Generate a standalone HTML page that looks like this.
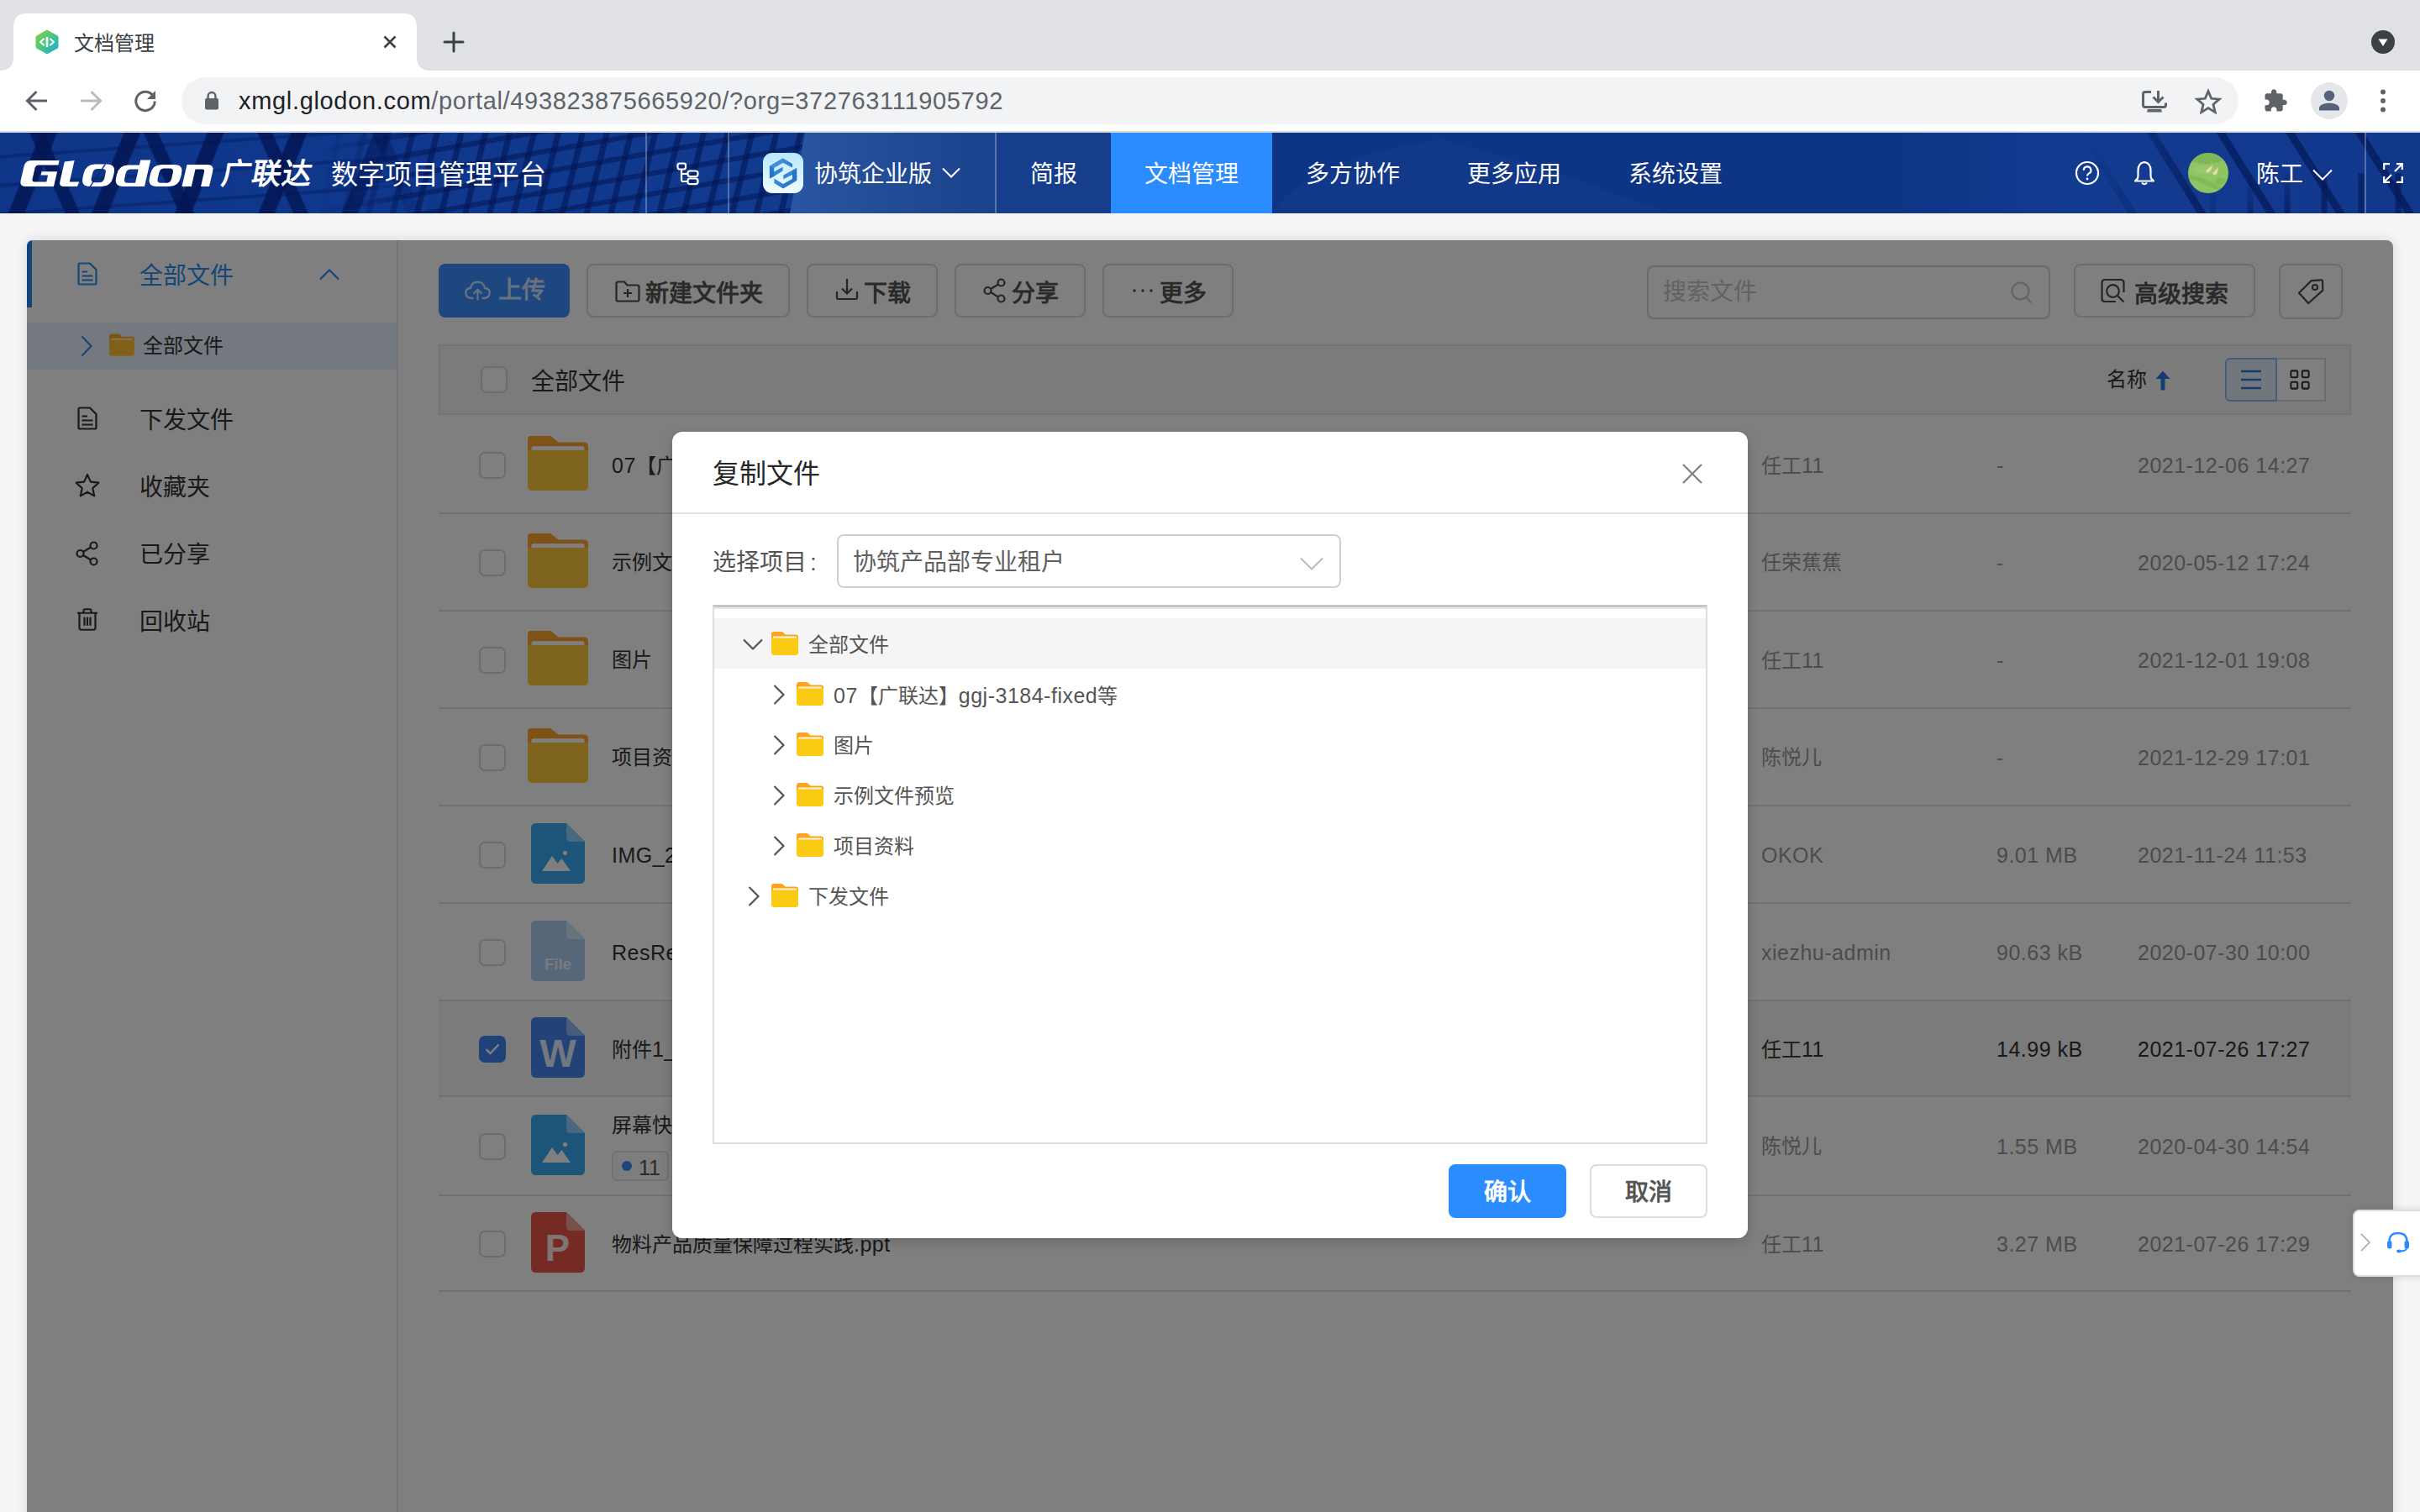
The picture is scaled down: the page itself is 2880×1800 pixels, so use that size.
<!DOCTYPE html>
<html lang="zh-CN"><head><meta charset="utf-8"><title>文档管理</title><style>

html,body{margin:0;padding:0}
body{width:2880px;height:1800px;overflow:hidden;position:relative;background:#f5f5f5;font-family:"Liberation Sans",sans-serif;color:#333;-webkit-font-smoothing:antialiased}
.a{position:absolute}
.t{position:absolute;white-space:nowrap}
svg{position:absolute;overflow:visible}
.nav{position:absolute;top:160px;height:96px;line-height:96px;color:#fff;font-size:28px;white-space:nowrap}
.btn{position:absolute;box-sizing:border-box;border:2px solid #d9d9d9;border-radius:8px;background:#fff}
.btn .t{font-weight:bold;font-size:28px;color:#555}
.cb{position:absolute;box-sizing:border-box;width:32px;height:32px;border:2px solid #d9d9d9;border-radius:7px;background:#fff}
.sep{position:absolute;left:522px;width:2276px;height:2px;background:#e0e4ec}
.c2{position:absolute;font-size:24px;color:#999;white-space:nowrap;height:40px;line-height:40px}
.fn{position:absolute;font-size:24px;color:#333;white-space:nowrap;height:40px;line-height:40px;left:728px}
.mi{position:absolute;margin-top:3px;left:166px;font-size:28px;color:#333;height:80px;line-height:80px;white-space:nowrap}
.l{font-size:25px;letter-spacing:0.5px}
.tr{position:absolute;margin-top:1.5px;font-size:24px;color:#555;white-space:nowrap;height:60px;line-height:60px}

</style></head><body>
<div class="a" style="left:0;top:0;width:2880px;height:84px;background:#dfe1e6"></div>
<svg style="left:0;top:16px" width="520" height="68" viewBox="0 0 520 68"><path d="M0,68 Q16,68 16,52 V16 Q16,0 32,0 H480 Q496,0 496,16 V52 Q496,68 512,68 Z" fill="#fff"/></svg>
<svg style="left:42px;top:35px" width="28" height="30" viewBox="0 0 28 30"><defs><linearGradient id="fg" x1="0" y1="0" x2="1" y2="1"><stop offset="0" stop-color="#8ad33a"/><stop offset="0.55" stop-color="#3fc58c"/><stop offset="1" stop-color="#1aa7ec"/></linearGradient></defs><path d="M14,0.5 L26.5,7.5 Q27.5,8.2 27.5,9.3 V20.7 Q27.5,21.8 26.5,22.5 L14,29.5 L1.5,22.5 Q0.5,21.8 0.5,20.7 V9.3 Q0.5,8.2 1.5,7.5 Z" fill="url(#fg)"/><path d="M10,11.5 L6,15 L10,18.5 M18,11.5 L22,15 L18,18.5" fill="none" stroke="#fff" stroke-width="2" stroke-linecap="round" stroke-linejoin="round"/><path d="M14,10 V20" stroke="#fff" stroke-width="2.6" stroke-linecap="round"/></svg>
<div class="t" style="left:88px;top:32px;height:40px;line-height:40px;font-size:24px;color:#3c4043">文档管理</div>
<svg style="left:456px;top:42px" width="16" height="16" viewBox="0 0 16 16"><path d="M1.5,1.5 L14.5,14.5 M14.5,1.5 L1.5,14.5" stroke="#3c4043" stroke-width="2.6" stroke-linecap="butt"/></svg>
<svg style="left:528px;top:38px" width="24" height="24" viewBox="0 0 24 24"><path d="M12,1 V23 M1,12 H23" stroke="#3c4043" stroke-width="3" stroke-linecap="round"/></svg>
<svg style="left:2822px;top:36px" width="28" height="28" viewBox="0 0 28 28"><circle cx="14" cy="14" r="14" fill="#3c4043"/><path d="M8.5,10.5 H19.5 L14,19 Z" fill="#fff"/></svg>
<div class="a" style="left:0;top:84px;width:2880px;height:72px;background:#fff"></div>
<div class="a" style="left:0;top:156px;width:2880px;height:2px;background:#d5d7da"></div>
<svg style="left:30px;top:106px" width="28" height="28" viewBox="0 0 28 28"><path d="M26,14 H3 M13.5,3 L2.5,14 L13.5,25" fill="none" stroke="#5f6368" stroke-width="3" stroke-linejoin="miter"/></svg>
<svg style="left:94px;top:106px" width="28" height="28" viewBox="0 0 28 28"><path d="M2,14 H25 M14.5,3 L25.5,14 L14.5,25" fill="none" stroke="#babcbe" stroke-width="3" stroke-linejoin="miter"/></svg>
<svg style="left:158px;top:105px" width="30" height="30" viewBox="0 0 30 30"><path d="M24.5,9.5 A11.2,11.2 0 1 0 26.2,15.5" fill="none" stroke="#5f6368" stroke-width="3"/><path d="M27,3 V13 H17 Z" fill="#5f6368"/></svg>
<div class="a" style="left:216px;top:92px;width:2448px;height:56px;border-radius:28px;background:#f1f3f4"></div>
<svg style="left:243px;top:108px" width="18" height="24" viewBox="0 0 18 24"><rect x="1" y="9" width="16" height="13.5" rx="2" fill="#5f6368"/><path d="M4.6,10 V6.4 A4.4,4.4 0 0 1 13.4,6.4 V10" fill="none" stroke="#5f6368" stroke-width="2.4"/></svg>
<div class="t" id="url" style="left:284px;top:98px;height:44px;line-height:44px;font-size:29px;color:#202124;letter-spacing:0.67px">xmgl.glodon.com<span style="color:#5f6368">/portal/493823875665920/?org=372763111905792</span></div>
<svg style="left:2548px;top:106px" width="32" height="30" viewBox="0 0 32 30"><path d="M12,3.5 H5 Q2.5,3.5 2.5,6 V19 Q2.5,21.5 5,21.5 H27 Q29.5,21.5 29.5,19 V16.5" fill="none" stroke="#5f6368" stroke-width="3"/><path d="M8,24 H24 L25,27.5 H7 Z" fill="#5f6368"/><path d="M20.5,2 V15 M14.5,9.5 L20.5,15.5 L26.5,9.5" fill="none" stroke="#5f6368" stroke-width="3"/></svg>
<svg style="left:2612px;top:105px" width="32" height="32" viewBox="0 0 32 32"><path d="M16,3.5 L19.7,12.3 L29.2,13.1 L22,19.3 L24.2,28.6 L16,23.6 L7.8,28.6 L10,19.3 L2.8,13.1 L12.3,12.3 Z" fill="none" stroke="#5f6368" stroke-width="2.8" stroke-linejoin="miter"/></svg>
<svg style="left:2693px;top:105px" width="30" height="30" viewBox="0 0 24 24"><path d="M20.5 11H19V7c0-1.1-.9-2-2-2h-4V3.5C13 2.12 11.88 1 10.5 1S8 2.12 8 3.5V5H4c-1.1 0-1.99.9-1.99 2v3.8H3.5c1.49 0 2.7 1.21 2.7 2.7s-1.21 2.7-2.7 2.7H2V20c0 1.1.9 2 2 2h3.8v-1.5c0-1.49 1.21-2.7 2.7-2.7 1.49 0 2.7 1.21 2.7 2.7V22H17c1.1 0 2-.9 2-2v-4h1.5c1.38 0 2.5-1.12 2.5-2.5S21.88 11 20.5 11z" fill="#5f6368"/></svg>
<svg style="left:2750px;top:98px" width="44" height="44" viewBox="0 0 44 44"><circle cx="22" cy="22" r="22" fill="#e4e6ea"/><circle cx="22" cy="16" r="6.2" fill="#56627a"/><path d="M10,33.5 V31 C10,26.5 17,24.8 22,24.8 S34,26.5 34,31 V33.5 Z" fill="#56627a"/></svg>
<svg style="left:2831px;top:104px" width="10" height="32" viewBox="0 0 10 32"><circle cx="5" cy="5.5" r="3" fill="#5f6368"/><circle cx="5" cy="16" r="3" fill="#5f6368"/><circle cx="5" cy="26.5" r="3" fill="#5f6368"/></svg>
<div class="a" style="left:0;top:158px;width:2880px;height:96px;background:#0d3485;overflow:hidden">
<div class="a" style="left:0;top:0;width:1184px;height:96px;background:linear-gradient(90deg,#0e3588,#10398e 60%,#123c90)"></div>
<div class="a" style="left:0;top:0;width:600px;height:96px;-webkit-mask-image:linear-gradient(90deg,#000 0,#000 400px,transparent 520px);mask-image:linear-gradient(90deg,#000 0,#000 400px,transparent 520px);background:repeating-linear-gradient(112deg,rgba(3,22,84,0) 0,rgba(3,22,84,0) 44px,rgba(3,22,84,0.85) 46px,rgba(3,22,84,0.85) 62px,rgba(3,22,84,0) 64px,rgba(3,22,84,0) 92px)"></div>
<div class="a" style="left:0;top:0;width:600px;height:96px;-webkit-mask-image:linear-gradient(90deg,#000 0,#000 400px,transparent 520px);mask-image:linear-gradient(90deg,#000 0,#000 400px,transparent 520px);background:repeating-linear-gradient(66deg,rgba(3,22,84,0) 0,rgba(3,22,84,0) 70px,rgba(3,22,84,0.8) 72px,rgba(3,22,84,0.8) 86px,rgba(3,22,84,0) 88px,rgba(3,22,84,0) 124px)"></div>
<div class="a" style="left:0;top:0;width:600px;height:96px;-webkit-mask-image:linear-gradient(90deg,#000 0,#000 400px,transparent 520px);mask-image:linear-gradient(90deg,#000 0,#000 400px,transparent 520px);background:repeating-linear-gradient(176deg,rgba(3,22,84,0) 0,rgba(3,22,84,0) 26px,rgba(3,22,84,0.35) 27px,rgba(3,22,84,0.35) 30px,rgba(3,22,84,0) 31px,rgba(3,22,84,0) 34px)"></div>
<div class="a" style="left:380px;top:0;width:580px;height:96px;-webkit-mask-image:linear-gradient(90deg,transparent 0,#000 120px);mask-image:linear-gradient(90deg,transparent 0,#000 120px);background:repeating-linear-gradient(104deg,rgba(3,22,84,0) 0,rgba(3,22,84,0) 20px,rgba(3,22,84,0.6) 21px,rgba(3,22,84,0.6) 27px,rgba(3,22,84,0) 28px)"></div>
<div class="a" style="left:380px;top:0;width:580px;height:96px;-webkit-mask-image:linear-gradient(90deg,transparent 0,#000 120px);mask-image:linear-gradient(90deg,transparent 0,#000 120px);background:repeating-linear-gradient(170deg,rgba(3,22,84,0) 0,rgba(3,22,84,0) 17px,rgba(3,22,84,0.55) 18px,rgba(3,22,84,0.55) 23px,rgba(3,22,84,0) 24px)"></div>
<svg style="left:930px;top:0" width="254" height="96" viewBox="0 0 254 96"><defs><linearGradient id="lz" x1="0" y1="0" x2="1" y2="0"><stop offset="0" stop-color="#2a55a0"/><stop offset="1" stop-color="#1b428c"/></linearGradient></defs><path d="M28,0 H254 V96 H10 Z" fill="url(#lz)"/></svg>
<div class="a" style="left:1184px;top:0;width:1696px;height:96px;background:#0d3485"></div><div class="a" style="left:1184px;top:0;width:138px;height:96px;background:#163e8c"></div>
<svg style="left:1514px;top:0" width="500" height="96" viewBox="0 0 500 96"><path d="M0,96 Q40,30 200,8 Q330,40 470,96 Z" fill="#143c8c" opacity="0.6"/></svg>
<div class="a" style="left:2250px;top:0;width:630px;height:96px;background:linear-gradient(90deg,rgba(20,60,146,0),rgba(20,60,146,0.85) 35%,rgba(18,56,140,0.9))"></div>
<div class="a" style="left:2480px;top:0;width:400px;height:96px;background:repeating-linear-gradient(58deg,rgba(3,22,84,0) 0,rgba(3,22,84,0) 44px,rgba(3,22,84,0.65) 45px,rgba(3,22,84,0.65) 53px,rgba(3,22,84,0) 54px,rgba(3,22,84,0) 70px);-webkit-mask-image:linear-gradient(90deg,transparent,#000 35%);mask-image:linear-gradient(90deg,transparent,#000 35%)"></div>
<div class="a" style="left:2600px;top:48px;width:280px;height:48px;background:repeating-linear-gradient(90deg,rgba(3,22,84,0) 0,rgba(3,22,84,0) 30px,rgba(3,22,84,0.6) 31px,rgba(3,22,84,0.6) 37px,rgba(3,22,84,0) 38px,rgba(3,22,84,0) 44px);-webkit-mask-image:linear-gradient(160deg,transparent 20%,#000 60%);mask-image:linear-gradient(160deg,transparent 20%,#000 60%)"></div>
</div>
<div class="a" style="left:0;top:254px;width:2880px;height:1px;background:#fff"></div>
<div class="a" style="left:768px;top:158px;width:2px;height:96px;background:rgba(255,255,255,0.28)"></div>
<div class="a" style="left:866px;top:158px;width:2px;height:96px;background:rgba(255,255,255,0.28)"></div>
<div class="a" style="left:1184px;top:158px;width:2px;height:96px;background:rgba(255,255,255,0.28)"></div>
<div class="a" style="left:2814px;top:158px;width:2px;height:96px;background:rgba(255,255,255,0.28)"></div>
<div class="a" style="left:1322px;top:158px;width:192px;height:96px;background:#2a8cff"></div>
<svg style="left:0;top:191px" width="260" height="32" viewBox="0 0 260 32"><g transform="translate(7.16,0) skewX(-13)" fill="#fff" fill-rule="evenodd">
<path d="M30,0 H63.5 V5.5 H40 Q36.5,5.5 36.5,9 V22 Q36.5,25.5 40,25.5 H54 V17.6 H45.5 V13.3 H64 V31 H30 Q23,31 23,24 V7 Q23,0 30,0 Z"/>
<path d="M70,1.5 L81.5,0 V25.5 H93 L92,31 H76 Q70,31 70,25 Z"/>
<path d="M107,4.4 H121 Q132,4.4 132,15.4 V20 Q132,31 121,31 H107 Q96,31 96,20 V15.4 Q96,4.4 107,4.4 Z M111.5,10 Q106.5,10 106.5,15 V21.2 Q106.5,26.2 111.5,26.2 H117 Q122,26.2 122,21.2 V15 Q122,10 117,10 Z"/>
<path d="M160,-0.5 H172 V31 H146.7 Q135.7,31 135.7,20 V16.5 Q135.7,5.5 146.7,5.5 H160 Z M151,10.6 Q146,10.6 146,15.6 V21.7 Q146,26.7 151,26.7 H160 V10.6 Z"/>
<path d="M186.5,5 H201.5 Q212.5,5 212.5,16 V20 Q212.5,31 201.5,31 H186.5 Q175.5,31 175.5,20 V16 Q175.5,5 186.5,5 Z M190.5,9.5 Q185.5,9.5 185.5,14.5 V21.7 Q185.5,26.7 190.5,26.7 H197 Q202,26.7 202,21.7 V14.5 Q202,9.5 197,9.5 Z"/>
<path d="M216.5,5 H241 Q249,5 249,13 V31 H239 V13.5 Q239,10.6 236,10.6 H227.8 V31 H216.5 Z"/>
<path d="M106.2,31.8 L107.8,31.8 L120,4.4 L118.4,4.4 Z" fill="#0a2a78"/>
</g></svg>
<div class="t" style="left:260px;top:183px;height:48px;line-height:48px;font-size:35px;font-weight:700;color:#fff;letter-spacing:1px;transform:skewX(-10deg);transform-origin:left bottom">广联达</div>
<div class="t" style="left:394px;top:184px;height:48px;line-height:48px;font-size:32px;color:#fff">数字项目管理平台</div>
<svg style="left:805px;top:193px" width="28" height="28" viewBox="0 0 28 28"><g fill="none" stroke="#fff" stroke-width="2.2"><rect x="1.5" y="1.5" width="9.5" height="7" rx="2.2"/><rect x="13.5" y="10.5" width="12" height="6.6" rx="2.6"/><rect x="13.5" y="19.5" width="12" height="6.6" rx="2.6"/><path d="M6,8.5 V21 Q6,23 8,23 H13.5 M6,14 H13.5"/></g></svg>
<svg style="left:908px;top:182px" width="48" height="48" viewBox="0 0 48 48"><defs><linearGradient id="ag" x1="0" y1="0" x2="0" y2="1"><stop offset="0" stop-color="#b9e8ff"/><stop offset="1" stop-color="#effcff"/></linearGradient><linearGradient id="al" x1="0" y1="0" x2="1" y2="1"><stop offset="0" stop-color="#4aa0ea"/><stop offset="1" stop-color="#1f69c4"/></linearGradient></defs><rect width="48" height="48" rx="11" fill="url(#ag)"/>
<path d="M7.9,15.5 L23.6,6.2 L35,12.9 L35,17.6 L23.8,11.7 L13.1,17.9 L13.1,22.6 L23.6,16.7 L23.6,21.2 L13.1,27.9 L7.9,30.5 Z" fill="url(#al)"/>
<path d="M40.2,18.1 L40.2,33.1 L24,42.6 L13.3,36 L13.3,30.5 L24,36.9 L35,30.7 L35,26 L24.3,31.2 L24.3,26.4 L35,20.7 Z" fill="url(#al)"/>
<path d="M7.9,15.5 L13.1,17.9 L13.1,27.9 L7.9,30.5 Z" fill="#1f66bd" opacity="0.55"/><path d="M40.2,18.1 L35,20.7 L35,30.7 L40.2,33.1 Z" fill="#1f66bd" opacity="0.55"/></svg>
<div class="nav" style="left:969px">协筑企业版</div>
<svg style="left:1121px;top:199px" width="22" height="13" viewBox="0 0 22 13"><path d="M1,1.5 L11,11.5 L21,1.5" fill="none" stroke="#fff" stroke-width="2"/></svg>
<div class="nav" style="left:1226px">简报</div>
<div class="nav" style="left:1362px">文档管理</div>
<div class="nav" style="left:1554px">多方协作</div>
<div class="nav" style="left:1746px">更多应用</div>
<div class="nav" style="left:1938px">系统设置</div>
<svg style="left:2469px;top:191px" width="30" height="30" viewBox="0 0 30 30"><circle cx="15" cy="15" r="13" fill="none" stroke="#fff" stroke-width="2.2"/><path d="M10.8,11.8 A4.3,4.3 0 1 1 16.8,15.6 Q15,16.6 15,18.6" fill="none" stroke="#fff" stroke-width="2.2"/><circle cx="15" cy="22" r="1.4" fill="#fff"/></svg>
<svg style="left:2539px;top:191px" width="26" height="30" viewBox="0 0 26 30"><path d="M13,2 Q5.5,3 5.5,12 V19 Q5.5,22 2,24.5 H24 Q20.5,22 20.5,19 V12 Q20.5,3 13,2 Z" fill="none" stroke="#fff" stroke-width="2.2" stroke-linejoin="round"/><path d="M10,26.5 Q13,29.5 16,26.5" fill="none" stroke="#fff" stroke-width="2.2"/></svg>
<svg style="left:2604px;top:182px" width="48" height="48" viewBox="0 0 48 48"><defs><clipPath id="ac"><circle cx="24" cy="24" r="24"/></clipPath></defs><g clip-path="url(#ac)"><rect width="48" height="48" fill="#8fc463"/><ellipse cx="22" cy="6" rx="20" ry="7" fill="#79b451" opacity="0.8"/><path d="M0,28 Q14,26 30,36 T48,40 V46 Q30,44 16,36 T0,34 Z" fill="#7cb754" opacity="0.7"/><ellipse cx="38" cy="34" rx="6" ry="4" fill="#7ab652" opacity="0.7"/><ellipse cx="20" cy="20" rx="16" ry="5" fill="#9fcb72" opacity="0.6"/>
<path d="M21.2,21.6 L29.2,14 L27.1,21.2 L22.4,24.1 Z M28.8,24.6 L36,16.9 L34.7,24.6 L31.7,26.7 Z" fill="#e3deb0"/><path d="M28.5,14.5 L27.5,10.5 M36,17 L38.5,18.5" stroke="#c9a95e" stroke-width="0.8"/></g></svg>
<div class="nav" style="left:2685px">陈工</div>
<svg style="left:2752px;top:201px" width="24" height="14" viewBox="0 0 24 14"><path d="M1,1.5 L12,12.5 L23,1.5" fill="none" stroke="#fff" stroke-width="2"/></svg>
<svg style="left:2836px;top:194px" width="24" height="24" viewBox="0 0 24 24"><g fill="none" stroke="#fff" stroke-width="2.2"><path d="M1.2,8 V1.2 H8 M16,1.2 H22.8 V8 M22.8,16 V22.8 H16 M8,22.8 H1.2 V16"/><path d="M22,2 L14,10 M2,22 L10,14"/><path d="M14.5,2 H22 V9.5 M2,14.5 V22 H9.5" stroke-width="0"/></g></svg>
<div class="a" style="left:32px;top:286px;width:2816px;height:1600px;background:#fff;border-radius:8px;box-shadow:0 0 14px rgba(0,0,0,0.13)"></div>
<div class="a" style="left:472px;top:286px;width:2px;height:1520px;background:#e4e8ee"></div>
<div class="a" style="left:32px;top:286px;width:6px;height:80px;background:#2b85f0;border-top-left-radius:8px"></div>
<svg style="left:92px;top:312px" width="24" height="28" viewBox="0 0 24 28"><g fill="none" stroke="#2d8cf0" stroke-width="2.2" stroke-linejoin="round"><path d="M1.5,3 Q1.5,1.5 3,1.5 H15 L22.5,9 V25 Q22.5,26.5 21,26.5 H3 Q1.5,26.5 1.5,25 Z"/><path d="M5.5,11.5 H12 M5.5,16.5 H18.5 M5.5,21.5 H18.5"/></g></svg>
<div class="mi" style="top:286px;color:#2d8cf0">全部文件</div>
<svg style="left:380px;top:320px" width="24" height="14" viewBox="0 0 24 14"><path d="M1,12.5 L12,1.5 L23,12.5" fill="none" stroke="#2d8cf0" stroke-width="2.2"/></svg>
<div class="a" style="left:32px;top:384px;width:440px;height:56px;background:#e9f2ff"></div>
<svg style="left:96px;top:399px" width="14" height="26" viewBox="0 0 14 26"><path d="M1.5,1.5 L12.5,13 L1.5,24.5" fill="none" stroke="#2d8cf0" stroke-width="2.2"/></svg>
<svg style="left:130px;top:397px" width="30" height="27" viewBox="0 0 32 28"><path d="M0,3 Q0,0 3,0 H11.5 Q13,0 14,1 L16.5,3.5 H29 Q32,3.5 32,6.5 V11 H0 Z" fill="#ffa91f"/><rect x="2" y="5.6" width="28" height="4" rx="1" fill="#fff0c8"/><path d="M0,7.5 H32 V25 Q32,28 29,28 H3 Q0,28 0,25 Z" fill="#ffc332"/></svg>
<div class="t" style="left:170px;top:384px;height:56px;line-height:56px;font-size:24px;color:#333">全部文件</div>
<svg style="left:92px;top:484px" width="24" height="28" viewBox="0 0 24 28"><g fill="none" stroke="#333" stroke-width="2.2" stroke-linejoin="round"><path d="M1.5,3 Q1.5,1.5 3,1.5 H15 L22.5,9 V25 Q22.5,26.5 21,26.5 H3 Q1.5,26.5 1.5,25 Z"/><path d="M5.5,11.5 H12 M5.5,16.5 H18.5 M5.5,21.5 H18.5"/></g></svg>
<div class="mi" style="top:458px">下发文件</div>
<svg style="left:89px;top:563px" width="30" height="30" viewBox="0 0 30 30"><path d="M15,2 L18.9,10.6 L28.3,11.7 L21.3,18.1 L23.2,27.4 L15,22.7 L6.8,27.4 L8.7,18.1 L1.7,11.7 L11.1,10.6 Z" fill="none" stroke="#333" stroke-width="2.2" stroke-linejoin="round"/></svg>
<div class="mi" style="top:538px">收藏夹</div>
<svg style="left:90px;top:644px" width="28" height="30" viewBox="0 0 28 30"><g fill="none" stroke="#333" stroke-width="2.2"><circle cx="21.5" cy="5.5" r="4"/><circle cx="5.5" cy="15" r="4"/><circle cx="21.5" cy="24.5" r="4"/><path d="M9,13 L18,7.5 M9,17 L18,22.5"/></g></svg>
<div class="mi" style="top:618px">已分享</div>
<svg style="left:91px;top:724px" width="26" height="27" viewBox="0 0 26 30" preserveAspectRatio="none"><g fill="none" stroke="#333" stroke-width="2.2" stroke-linejoin="round"><path d="M1,6.5 H25 M8.5,6.5 V3.5 Q8.5,1.5 10.5,1.5 H15.5 Q17.5,1.5 17.5,3.5 V6.5"/><path d="M3.5,6.5 V26 Q3.5,28.5 6,28.5 H20 Q22.5,28.5 22.5,26 V6.5"/><path d="M9.5,12 V23 M13,12 V23 M16.5,12 V23"/></g></svg>
<div class="mi" style="top:698px">回收站</div>
<div class="a" style="left:522px;top:314px;width:156px;height:64px;border-radius:8px;background:#3a8ffc"></div>
<svg style="left:553px;top:334px" width="31" height="24" viewBox="0 0 36 28"><g fill="none" stroke="#cfe3ff" stroke-width="2.7" stroke-linecap="round" stroke-linejoin="round"><path d="M11,24.5 H9 Q1.5,24 1.5,17 Q1.5,11 8,10.5 Q10,2 18,2 Q26,2 28,10.5 Q34.5,11 34.5,17 Q34.5,24 27,24.5 H25"/><path d="M18,26 V13 M13,17.5 L18,12.5 L23,17.5"/></g></svg>
<div class="t" style="left:593px;top:314px;height:64px;line-height:64px;font-size:28px;font-weight:bold;color:#cfe3ff">上传</div>
<div class="btn" style="left:698px;top:314px;width:242px;height:64px"><svg style="left:32px;top:17.5px" width="30" height="26" viewBox="0 0 30 26"><g fill="none" stroke="#4a4a4a" stroke-width="2.2" stroke-linejoin="round"><path d="M1.5,3.5 Q1.5,1.5 3.5,1.5 H11 L14.5,5.5 H26.5 Q28.5,5.5 28.5,7.5 V22.5 Q28.5,24.5 26.5,24.5 H3.5 Q1.5,24.5 1.5,22.5 Z"/><path d="M15,10 V20 M10,15 H20"/></g></svg><div class="t" style="left:68px;top:2px;height:64px;line-height:64px">新建文件夹</div></div>
<div class="btn" style="left:960px;top:314px;width:156px;height:64px"><svg style="left:32px;top:14px" width="28" height="28" viewBox="0 0 28 28"><g fill="none" stroke="#4a4a4a" stroke-width="2.2" stroke-linejoin="round"><path d="M2,17 V24 Q2,26 4,26 H24 Q26,26 26,24 V17"/><path d="M14,2 V19 M8,13.5 L14,19.5 L20,13.5"/></g></svg><div class="t" style="left:66px;top:2px;height:64px;line-height:64px">下载</div></div>
<div class="btn" style="left:1136px;top:314px;width:156px;height:64px"><svg style="left:32px;top:15px" width="28" height="30" viewBox="0 0 28 30"><g fill="none" stroke="#4a4a4a" stroke-width="2.2"><circle cx="21.5" cy="5.5" r="4"/><circle cx="5.5" cy="15" r="4"/><circle cx="21.5" cy="24.5" r="4"/><path d="M9,13 L18,7.5 M9,17 L18,22.5"/></g></svg><div class="t" style="left:66px;top:2px;height:64px;line-height:64px">分享</div></div>
<div class="btn" style="left:1312px;top:314px;width:156px;height:64px"><svg style="left:34px;top:28px" width="24" height="4" viewBox="0 0 24 4"><circle cx="2" cy="2" r="1.7" fill="#4a4a4a"/><circle cx="12" cy="2" r="1.7" fill="#4a4a4a"/><circle cx="22" cy="2" r="1.7" fill="#4a4a4a"/></svg><div class="t" style="left:66px;top:2px;height:64px;line-height:64px">更多</div></div>
<div class="a" style="box-sizing:border-box;left:1960px;top:316px;width:480px;height:64px;border:2px solid #d4d4d4;border-radius:8px;background:#fff"></div>
<div class="t" style="left:1979px;top:316px;height:64px;line-height:64px;font-size:28px;color:#c4c4c4">搜索文件</div>
<svg style="left:2393px;top:334px" width="26" height="28" viewBox="0 0 26 28"><circle cx="11.5" cy="12.5" r="10" fill="none" stroke="#c8c8c8" stroke-width="2.2"/><path d="M19,20.5 L24.5,26.5" stroke="#c8c8c8" stroke-width="2.2"/></svg>
<div class="btn" style="left:2468px;top:314px;width:216px;height:64px"><svg style="left:30px;top:15px" width="30" height="30" viewBox="0 0 30 30"><g fill="none" stroke="#4a4a4a" stroke-width="2.2"><path d="M18,28 H5 Q1.5,28 1.5,24.5 V5.5 Q1.5,2 5,2 H24 Q27.5,2 27.5,5.5 V17"/><circle cx="14.5" cy="15.5" r="7.3"/><path d="M20,21 L27.5,28.5"/></g></svg><div class="t" style="left:70px;top:3px;height:64px;line-height:64px">高级搜索</div></div>
<div class="btn" style="left:2712px;top:314px;width:76px;height:66px"><svg style="left:21px;top:17px" width="32" height="30" viewBox="0 0 32 30"><g fill="none" stroke="#4a4a4a" stroke-width="2.2" stroke-linejoin="round"><path d="M1,15.7 L15.5,1.2 L27.5,0.3 Q29,0.2 29,1.7 L29.3,12.6 L12.2,28 Z"/><circle cx="20" cy="9" r="3"/></g></svg></div>
<div class="a" style="box-sizing:border-box;left:522px;top:410px;width:2276px;height:84px;background:#f6f6f6;border:2px solid #e8e8e8"></div>
<div class="cb" style="left:572px;top:436px"></div>
<div class="t" style="left:632px;top:423px;height:64px;line-height:64px;font-size:28px;color:#333">全部文件</div>
<div class="t" style="left:2507px;top:422px;height:60px;line-height:60px;font-size:24px;color:#333">名称</div>
<svg style="left:2565px;top:441px" width="18" height="24" viewBox="0 0 18 24"><path d="M9,0.5 L17.5,10 H11.5 V23.5 H6.5 V10 H0.5 Z" fill="#2d7be0"/></svg>
<div class="a" style="box-sizing:border-box;left:2708px;top:426px;width:60px;height:52px;border:2px solid #d9d9d9;background:#fff"></div>
<div class="a" style="box-sizing:border-box;left:2648px;top:426px;width:62px;height:52px;border:2px solid #8ab8f5;background:#e4eefc;border-radius:6px 0 0 6px"></div>
<svg style="left:2666px;top:440px" width="26" height="24" viewBox="0 0 26 24"><path d="M1,2 H25 M1,12 H25 M1,22 H25" stroke="#2d7be0" stroke-width="2.4"/></svg>
<svg style="left:2725px;top:440px" width="24" height="24" viewBox="0 0 26 26"><g fill="none" stroke="#333" stroke-width="2.2"><rect x="1.5" y="1.5" width="8.5" height="8.5" rx="1.5"/><rect x="16" y="1.5" width="8.5" height="8.5" rx="1.5"/><rect x="1.5" y="16" width="8.5" height="8.5" rx="1.5"/><rect x="16" y="16" width="8.5" height="8.5" rx="1.5"/></g></svg>
<div class="sep" style="top:610px"></div>
<div class="cb" style="left:570px;top:538px"></div>
<svg style="left:628px;top:519px" width="72" height="65" viewBox="0 0 72 65"><path d="M0,4 Q0,0 4,0 H27 L36.5,7.5 H67 Q72,7.5 72,12.5 V19 H0 Z" fill="#ffa62f"/><path d="M4.5,18 V14.5 Q4.5,12.3 6.7,12.3 H65.3 Q67.5,12.3 67.5,14.5 V18 Z" fill="#fff"/><path d="M0,17 H72 V60 Q72,65 67,65 H5 Q0,65 0,60 Z" fill="#ffc93c"/></svg>
<div class="fn" style="top:534px"><span class="l">07</span>【广联达】<span class="l">ggj-3184-fixed</span>等</div>
<div class="c2" style="left:2096px;top:534px;color:#999">任工<span class="l">11</span></div>
<div class="c2" style="left:2376px;top:534px;color:#999"><span class="l">-</span></div>
<div class="c2 dt" style="left:2544px;top:534px;color:#999"><span class="l">2021-12-06 14:27</span></div>
<div class="sep" style="top:726px"></div>
<div class="cb" style="left:570px;top:654px"></div>
<svg style="left:628px;top:635px" width="72" height="65" viewBox="0 0 72 65"><path d="M0,4 Q0,0 4,0 H27 L36.5,7.5 H67 Q72,7.5 72,12.5 V19 H0 Z" fill="#ffa62f"/><path d="M4.5,18 V14.5 Q4.5,12.3 6.7,12.3 H65.3 Q67.5,12.3 67.5,14.5 V18 Z" fill="#fff"/><path d="M0,17 H72 V60 Q72,65 67,65 H5 Q0,65 0,60 Z" fill="#ffc93c"/></svg>
<div class="fn" style="top:650px">示例文件预览</div>
<div class="c2" style="left:2096px;top:650px;color:#999">任荣蕉蕉</div>
<div class="c2" style="left:2376px;top:650px;color:#999"><span class="l">-</span></div>
<div class="c2 dt" style="left:2544px;top:650px;color:#999"><span class="l">2020-05-12 17:24</span></div>
<div class="sep" style="top:842px"></div>
<div class="cb" style="left:570px;top:770px"></div>
<svg style="left:628px;top:751px" width="72" height="65" viewBox="0 0 72 65"><path d="M0,4 Q0,0 4,0 H27 L36.5,7.5 H67 Q72,7.5 72,12.5 V19 H0 Z" fill="#ffa62f"/><path d="M4.5,18 V14.5 Q4.5,12.3 6.7,12.3 H65.3 Q67.5,12.3 67.5,14.5 V18 Z" fill="#fff"/><path d="M0,17 H72 V60 Q72,65 67,65 H5 Q0,65 0,60 Z" fill="#ffc93c"/></svg>
<div class="fn" style="top:766px">图片</div>
<div class="c2" style="left:2096px;top:766px;color:#999">任工<span class="l">11</span></div>
<div class="c2" style="left:2376px;top:766px;color:#999"><span class="l">-</span></div>
<div class="c2 dt" style="left:2544px;top:766px;color:#999"><span class="l">2021-12-01 19:08</span></div>
<div class="sep" style="top:958px"></div>
<div class="cb" style="left:570px;top:886px"></div>
<svg style="left:628px;top:867px" width="72" height="65" viewBox="0 0 72 65"><path d="M0,4 Q0,0 4,0 H27 L36.5,7.5 H67 Q72,7.5 72,12.5 V19 H0 Z" fill="#ffa62f"/><path d="M4.5,18 V14.5 Q4.5,12.3 6.7,12.3 H65.3 Q67.5,12.3 67.5,14.5 V18 Z" fill="#fff"/><path d="M0,17 H72 V60 Q72,65 67,65 H5 Q0,65 0,60 Z" fill="#ffc93c"/></svg>
<div class="fn" style="top:882px">项目资料</div>
<div class="c2" style="left:2096px;top:882px;color:#999">陈悦儿</div>
<div class="c2" style="left:2376px;top:882px;color:#999"><span class="l">-</span></div>
<div class="c2 dt" style="left:2544px;top:882px;color:#999"><span class="l">2021-12-29 17:01</span></div>
<div class="sep" style="top:1074px"></div>
<div class="cb" style="left:570px;top:1002px"></div>
<svg style="left:632px;top:980px" width="64" height="72" viewBox="0 0 64 72"><path d="M0,6 Q0,0 6,0 H42 L64,22 V66 Q64,72 58,72 H6 Q0,72 0,66 Z" fill="#3aa9f5"/><path d="M42,0 L64,22 H47 Q42,22 42,17 Z" fill="#8fd0ff"/><path d="M13,57 L25,39 L31.5,48 L36.5,42 L47,57 Z" fill="#fff"/><circle cx="40.5" cy="35.5" r="2.6" fill="#fff"/></svg>
<div class="fn" style="top:998px"><span class="l">IMG_20211124.jpg</span></div>
<div class="c2" style="left:2096px;top:998px;color:#999"><span class="l">OKOK</span></div>
<div class="c2" style="left:2376px;top:998px;color:#999"><span class="l">9.01 MB</span></div>
<div class="c2 dt" style="left:2544px;top:998px;color:#999"><span class="l">2021-11-24 11:53</span></div>
<div class="sep" style="top:1190px"></div>
<div class="cb" style="left:570px;top:1118px"></div>
<svg style="left:632px;top:1096px" width="64" height="72" viewBox="0 0 64 72"><path d="M0,6 Q0,0 6,0 H42 L64,22 V66 Q64,72 58,72 H6 Q0,72 0,66 Z" fill="#aecff5"/><path d="M42,0 L64,22 H47 Q42,22 42,17 Z" fill="#d3e6fb"/><text x="32" y="58" text-anchor="middle" font-family="Liberation Sans, sans-serif" font-weight="bold" font-size="18.5" fill="#eef6ff">File</text></svg>
<div class="fn" style="top:1114px"><span class="l">ResReport.dat</span></div>
<div class="c2" style="left:2096px;top:1114px;color:#999"><span class="l">xiezhu-admin</span></div>
<div class="c2" style="left:2376px;top:1114px;color:#999"><span class="l">90.63 kB</span></div>
<div class="c2 dt" style="left:2544px;top:1114px;color:#999"><span class="l">2020-07-30 10:00</span></div>
<div class="a" style="left:522px;top:1192px;width:2276px;height:112px;background:#f6f6f6"></div>
<div class="sep" style="top:1304px"></div>
<div class="cb" style="left:570px;top:1233px;background:#3f86f3;border-color:#3f86f3"><svg style="left:5px;top:7px" width="18" height="14" viewBox="0 0 18 14"><path d="M1.5,7 L6.5,12 L16.5,1.5" fill="none" stroke="#fff" stroke-width="2.4"/></svg></div>
<svg style="left:632px;top:1211px" width="64" height="72" viewBox="0 0 64 72"><path d="M0,6 Q0,0 6,0 H42 L64,22 V66 Q64,72 58,72 H6 Q0,72 0,66 Z" fill="#4784f0"/><path d="M42,0 L64,22 H47 Q42,22 42,17 Z" fill="#8fb6fa"/><text x="32" y="59" text-anchor="middle" font-family="Liberation Sans, sans-serif" font-weight="bold" font-size="46" fill="#e6efff">W</text></svg>
<div class="fn" style="top:1229px">附件<span class="l">1_</span>项目说明<span class="l">.docx</span></div>
<div class="c2" style="left:2096px;top:1229px;color:#333">任工<span class="l">11</span></div>
<div class="c2" style="left:2376px;top:1229px;color:#333"><span class="l">14.99 kB</span></div>
<div class="c2 dt" style="left:2544px;top:1229px;color:#333"><span class="l">2021-07-26 17:27</span></div>
<div class="sep" style="top:1422px"></div>
<div class="cb" style="left:570px;top:1349px"></div>
<svg style="left:632px;top:1327px" width="64" height="72" viewBox="0 0 64 72"><path d="M0,6 Q0,0 6,0 H42 L64,22 V66 Q64,72 58,72 H6 Q0,72 0,66 Z" fill="#3aa9f5"/><path d="M42,0 L64,22 H47 Q42,22 42,17 Z" fill="#8fd0ff"/><path d="M13,57 L25,39 L31.5,48 L36.5,42 L47,57 Z" fill="#fff"/><circle cx="40.5" cy="35.5" r="2.6" fill="#fff"/></svg>
<div class="fn" style="top:1319px">屏幕快照 <span class="l">2020-04-30.png</span></div>
<div class="a" style="box-sizing:border-box;left:728px;top:1370px;width:68px;height:36px;border:2px solid #e4e4e4;border-radius:6px;background:#fafafa"></div>
<div class="a" style="left:740px;top:1382px;width:12px;height:12px;border-radius:6px;background:#3a8ff5"></div>
<div class="t" style="left:760px;top:1372px;height:36px;line-height:36px;font-size:25px;color:#555">11</div>
<div class="c2" style="left:2096px;top:1345px;color:#999">陈悦儿</div>
<div class="c2" style="left:2376px;top:1345px;color:#999"><span class="l">1.55 MB</span></div>
<div class="c2 dt" style="left:2544px;top:1345px;color:#999"><span class="l">2020-04-30 14:54</span></div>
<div class="sep" style="top:1536px"></div>
<div class="cb" style="left:570px;top:1465px"></div>
<svg style="left:632px;top:1443px" width="64" height="72" viewBox="0 0 64 72"><path d="M0,6 Q0,0 6,0 H42 L64,22 V66 Q64,72 58,72 H6 Q0,72 0,66 Z" fill="#ea5547"/><path d="M42,0 L64,22 H47 Q42,22 42,17 Z" fill="#f5a097"/><text x="31.5" y="58" text-anchor="middle" font-family="Liberation Sans, sans-serif" font-weight="bold" font-size="44" fill="#ffe9e6">P</text></svg>
<div class="fn" style="top:1461px">物料产品质量保障过程实践<span class="l">.ppt</span></div>
<div class="c2" style="left:2096px;top:1461px;color:#999">任工<span class="l">11</span></div>
<div class="c2" style="left:2376px;top:1461px;color:#999"><span class="l">3.27 MB</span></div>
<div class="c2 dt" style="left:2544px;top:1461px;color:#999"><span class="l">2021-07-26 17:29</span></div>
<div class="a" style="left:32px;top:286px;width:2816px;height:1600px;background:rgba(0,0,0,0.5);border-radius:8px"></div>
<div class="a" style="left:800px;top:514px;width:1280px;height:960px;background:#fff;border-radius:12px;box-shadow:0 4px 14px rgba(0,0,0,0.18)"></div>
<div class="t" style="left:848px;top:534px;height:60px;line-height:60px;font-size:32px;color:#262626">复制文件</div>
<svg style="left:2002px;top:552px" width="24" height="24" viewBox="0 0 24 24"><path d="M1,1 L23,23 M23,1 L1,23" stroke="#808080" stroke-width="2.2"/></svg>
<div class="a" style="left:800px;top:610px;width:1280px;height:2px;background:#e3e3e3"></div>
<div class="t" style="left:848px;top:637.5px;height:64px;line-height:64px;font-size:28px;color:#555">选择项目<span style="margin-left:4px">:</span></div>
<div class="a" style="box-sizing:border-box;left:996px;top:636px;width:600px;height:64px;border:2px solid #d0d0d0;border-radius:8px;background:#fff"></div>
<div class="t" style="left:1015px;top:637.5px;height:64px;line-height:64px;font-size:28px;color:#606060">协筑产品部专业租户</div>
<svg style="left:1547px;top:663px" width="28" height="16" viewBox="0 0 28 16"><path d="M1,1.5 L14,14.5 L27,1.5" fill="none" stroke="#bdbdbd" stroke-width="2.2"/></svg>
<div class="a" style="box-sizing:border-box;left:848px;top:720px;width:1184px;height:642px;background:#fff;border-style:solid;border-width:3px 2px 2px 2px;border-color:#c6c6c6 #dcdcdc #dcdcdc #dedede"></div>
<div class="a" style="left:850px;top:723px;width:1180px;height:2px;background:#e9e9e9"></div>
<div class="a" style="left:850px;top:736px;width:1180px;height:60px;background:#f5f5f5"></div>
<svg style="left:884px;top:760px" width="24" height="14" viewBox="0 0 24 14"><path d="M1,1.5 L12,12.5 L23,1.5" fill="none" stroke="#555" stroke-width="2.2"/></svg>
<svg style="left:918px;top:752px" width="32" height="28" viewBox="0 0 32 28"><path d="M0,3 Q0,0 3,0 H11.5 Q13,0 14,1 L16.5,3.5 H29 Q32,3.5 32,6.5 V11 H0 Z" fill="#ffa21e"/><rect x="2" y="5.6" width="28" height="4" rx="1" fill="#fff6dc"/><path d="M0,7.5 H32 V25 Q32,28 29,28 H3 Q0,28 0,25 Z" fill="#fbcb14"/></svg>
<div class="tr" style="left:962px;top:736px">全部文件</div>
<svg style="left:920px;top:815px" width="14" height="24" viewBox="0 0 14 24"><path d="M1.5,1 L12.5,12 L1.5,23" fill="none" stroke="#555" stroke-width="2.2"/></svg>
<svg style="left:948px;top:812px" width="32" height="28" viewBox="0 0 32 28"><path d="M0,3 Q0,0 3,0 H11.5 Q13,0 14,1 L16.5,3.5 H29 Q32,3.5 32,6.5 V11 H0 Z" fill="#ffa21e"/><rect x="2" y="5.6" width="28" height="4" rx="1" fill="#fff6dc"/><path d="M0,7.5 H32 V25 Q32,28 29,28 H3 Q0,28 0,25 Z" fill="#fbcb14"/></svg>
<div class="tr" style="left:992px;top:796px"><span class="l">07</span>【广联达】<span class="l">ggj-3184-fixed</span>等</div>
<svg style="left:920px;top:875px" width="14" height="24" viewBox="0 0 14 24"><path d="M1.5,1 L12.5,12 L1.5,23" fill="none" stroke="#555" stroke-width="2.2"/></svg>
<svg style="left:948px;top:872px" width="32" height="28" viewBox="0 0 32 28"><path d="M0,3 Q0,0 3,0 H11.5 Q13,0 14,1 L16.5,3.5 H29 Q32,3.5 32,6.5 V11 H0 Z" fill="#ffa21e"/><rect x="2" y="5.6" width="28" height="4" rx="1" fill="#fff6dc"/><path d="M0,7.5 H32 V25 Q32,28 29,28 H3 Q0,28 0,25 Z" fill="#fbcb14"/></svg>
<div class="tr" style="left:992px;top:856px">图片</div>
<svg style="left:920px;top:935px" width="14" height="24" viewBox="0 0 14 24"><path d="M1.5,1 L12.5,12 L1.5,23" fill="none" stroke="#555" stroke-width="2.2"/></svg>
<svg style="left:948px;top:932px" width="32" height="28" viewBox="0 0 32 28"><path d="M0,3 Q0,0 3,0 H11.5 Q13,0 14,1 L16.5,3.5 H29 Q32,3.5 32,6.5 V11 H0 Z" fill="#ffa21e"/><rect x="2" y="5.6" width="28" height="4" rx="1" fill="#fff6dc"/><path d="M0,7.5 H32 V25 Q32,28 29,28 H3 Q0,28 0,25 Z" fill="#fbcb14"/></svg>
<div class="tr" style="left:992px;top:916px">示例文件预览</div>
<svg style="left:920px;top:995px" width="14" height="24" viewBox="0 0 14 24"><path d="M1.5,1 L12.5,12 L1.5,23" fill="none" stroke="#555" stroke-width="2.2"/></svg>
<svg style="left:948px;top:992px" width="32" height="28" viewBox="0 0 32 28"><path d="M0,3 Q0,0 3,0 H11.5 Q13,0 14,1 L16.5,3.5 H29 Q32,3.5 32,6.5 V11 H0 Z" fill="#ffa21e"/><rect x="2" y="5.6" width="28" height="4" rx="1" fill="#fff6dc"/><path d="M0,7.5 H32 V25 Q32,28 29,28 H3 Q0,28 0,25 Z" fill="#fbcb14"/></svg>
<div class="tr" style="left:992px;top:976px">项目资料</div>
<svg style="left:890px;top:1055px" width="14" height="24" viewBox="0 0 14 24"><path d="M1.5,1 L12.5,12 L1.5,23" fill="none" stroke="#555" stroke-width="2.2"/></svg>
<svg style="left:918px;top:1052px" width="32" height="28" viewBox="0 0 32 28"><path d="M0,3 Q0,0 3,0 H11.5 Q13,0 14,1 L16.5,3.5 H29 Q32,3.5 32,6.5 V11 H0 Z" fill="#ffa21e"/><rect x="2" y="5.6" width="28" height="4" rx="1" fill="#fff6dc"/><path d="M0,7.5 H32 V25 Q32,28 29,28 H3 Q0,28 0,25 Z" fill="#fbcb14"/></svg>
<div class="tr" style="left:962px;top:1036px">下发文件</div>
<div class="a" style="left:1724px;top:1386px;width:140px;height:64px;border-radius:8px;background:#2a8cfe"></div>
<div class="t" style="left:1724px;top:1386px;width:140px;text-align:center;height:64px;line-height:68px;font-size:28px;font-weight:bold;color:#fff">确认</div>
<div class="a" style="box-sizing:border-box;left:1892px;top:1386px;width:140px;height:64px;border-radius:8px;background:#fff;border:2px solid #dcdcdc"></div>
<div class="t" style="left:1892px;top:1386px;width:140px;text-align:center;height:64px;line-height:68px;font-size:28px;font-weight:bold;color:#555">取消</div>
<div class="a" style="box-sizing:border-box;left:2800px;top:1440px;width:90px;height:80px;background:#fff;border:2px solid #dedede;border-radius:8px;box-shadow:0 0 8px rgba(0,0,0,0.12)"></div>
<svg style="left:2809px;top:1468px" width="12" height="22" viewBox="0 0 12 22"><path d="M1,1 L11,11 L1,21" fill="none" stroke="#b5b5b5" stroke-width="1.8"/></svg>
<svg style="left:2840px;top:1466px" width="28" height="26" viewBox="0 0 28 26"><path d="M3.5,14 V12 Q3.5,2 14,2 Q24.5,2 24.5,12 V14" fill="none" stroke="#2a8cfe" stroke-width="2.4"/><rect x="1" y="11" width="5.5" height="9.5" rx="2.5" fill="#2a8cfe"/><rect x="21.5" y="11" width="5.5" height="9.5" rx="2.5" fill="#2a8cfe"/><path d="M24.5,19 Q24.5,23 17,23.5" fill="none" stroke="#2a8cfe" stroke-width="2"/><ellipse cx="15" cy="23.5" rx="2.8" ry="1.9" fill="#2a8cfe"/></svg>
</body></html>
